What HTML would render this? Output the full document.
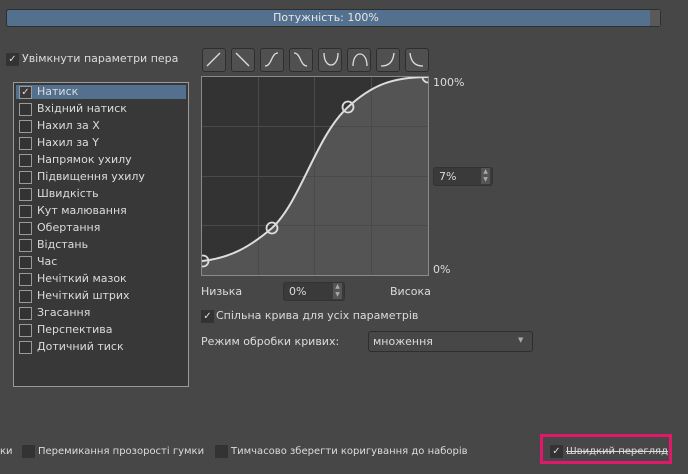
<!DOCTYPE html><html><head><meta charset="utf-8"><style>
body{margin:0;width:688px;height:474px;background:#474747;font-family:"DejaVu Sans","Liberation Sans",sans-serif;font-size:11px;color:#dcdcdc;position:relative;overflow:hidden}
.a{position:absolute;white-space:nowrap}
.cb{position:absolute;width:11px;height:11px;border:1px solid #9a9a9a;background:#333}
.dk{position:absolute;width:13px;height:13px;background:#333;color:#ddd;font-size:10px;line-height:13px;text-align:center}
.btn{position:absolute;top:48px;width:22px;height:22px;border:1px solid #2e2e2e;border-radius:3px;background:#505050}
.spin{position:absolute;background:#3a3a3a;border:1px solid #333;border-radius:3px}
.sm{font-size:10px}
</style></head><body>
<div class="a" style="left:6px;top:9px;width:655px;height:18px;background:#53708f;border:1px solid #2e2e2e;border-radius:3px;box-sizing:border-box"></div>
<div class="a" style="left:650px;top:10px;width:10px;height:16px;background:#5a5a5a"></div>
<div class="a" style="left:0;top:11px;width:652px;text-align:center;color:#e8e8e8">Потужність: 100%</div>
<div class="dk" style="left:6px;top:53px">✓</div>
<div class="a" style="left:22px;top:52px">Увімкнути параметри пера</div>

<div class="btn" style="left:202px"></div><div class="btn" style="left:231px"></div><div class="btn" style="left:260px"></div><div class="btn" style="left:289px"></div><div class="btn" style="left:318px"></div><div class="btn" style="left:347px"></div><div class="btn" style="left:376px"></div><div class="btn" style="left:405px"></div>
<svg class="a" style="left:0;top:0" width="688" height="474" fill="none" stroke="#ddd" stroke-width="1.3">
<path d="M207 66L220 53"/><path d="M236 53L249 66"/><path d="M265 66C272 66 271 53 278 53"/><path d="M294 53C301 53 300 66 307 66"/><path d="M324 53C324 69 338 69 338 53"/><path d="M353 66C353 50 367 50 367 66"/><path d="M381 66C389 66 393 62 394 53"/><path d="M410 53C411 62 415 66 423 66"/>
</svg>

<div class="a" style="left:201px;top:76px;width:227px;height:199px;background:#333;border:1px solid #8a8a8a;box-sizing:border-box"></div>
<svg class="a" style="left:201px;top:76px" width="228" height="200">
<path d="M1 185C30 182 50 170 71 152C100 125 115 60 147 31C170 10 190 1 227 1L227 199L1 199Z" fill="#545454"/>
<g stroke="#4a4a4a" stroke-width="1"><path d="M57.5 1V199M113.5 1V199M170.5 1V199M1 50.5H227M1 100.5H227M1 149.5H227"/></g>
<path d="M1 185C30 182 50 170 71 152C100 125 115 60 147 31C170 10 190 1 227 1" fill="none" stroke="#ddd" stroke-width="2"/>
<g fill="none" stroke="#ddd" stroke-width="1.8"><circle cx="71" cy="152" r="5.5"/><circle cx="147" cy="31" r="5.5"/><circle cx="2" cy="185" r="5.5"/><circle cx="227" cy="1" r="5.5"/></g>
<rect x="0.5" y="0.5" width="227" height="199" fill="none" stroke="#8a8a8a"/>
</svg>
<div class="a" style="left:433px;top:76px">100%</div>
<div class="a" style="left:433px;top:263px">0%</div>
<div class="spin" style="left:433px;top:167px;width:58px;height:17px"></div>
<div class="a" style="left:439px;top:170px">7%</div>
<div class="a" style="left:481px;top:168px;width:9px;height:16px;background:#555;font-size:6px;line-height:8px;text-align:center;color:#aaa">▲<br>▼</div>
<div class="a" style="left:201px;top:285px">Низька</div>
<div class="spin" style="left:283px;top:282px;width:60px;height:17px"></div>
<div class="a" style="left:289px;top:285px">0%</div>
<div class="a" style="left:333px;top:283px;width:9px;height:16px;background:#555;font-size:6px;line-height:8px;text-align:center;color:#aaa">▲<br>▼</div>
<div class="a" style="left:390px;top:285px">Висока</div>
<div class="dk" style="left:201px;top:310px">✓</div>
<div class="a" style="left:216px;top:309px">Спільна крива для усіх параметрів</div>
<div class="a" style="left:201px;top:335px">Режим обробки кривих:</div>
<div class="a" style="left:368px;top:331px;width:165px;height:21px;background:#474747;border:1px solid #2e2e2e;border-radius:3px;box-sizing:border-box"></div>
<div class="a" style="left:373px;top:335px">множення</div>
<div class="a" style="left:518px;top:336px;font-size:7px;color:#aaa">▼</div>

<div class="a" style="left:13px;top:82px;width:176px;height:305px;background:#383838;border:1px solid #9a9a9a;box-sizing:border-box"></div>
<div class="a" style="left:16px;top:85px;width:170px;height:14px;background:#53708f"></div>
<div style="position:absolute;left:0;top:0">
<div class="cb" style="left:19px;top:86px;background:#3a3a3a;text-align:center;line-height:11px;font-size:10px">✓</div><div class="a" style="left:37px;top:85px">Натиск</div>
<div class="cb" style="left:19px;top:103px"></div><div class="a" style="left:37px;top:102px">Вхідний натиск</div>
<div class="cb" style="left:19px;top:120px"></div><div class="a" style="left:37px;top:119px">Нахил за X</div>
<div class="cb" style="left:19px;top:137px"></div><div class="a" style="left:37px;top:136px">Нахил за Y</div>
<div class="cb" style="left:19px;top:154px"></div><div class="a" style="left:37px;top:153px">Напрямок ухилу</div>
<div class="cb" style="left:19px;top:171px"></div><div class="a" style="left:37px;top:170px">Підвищення ухилу</div>
<div class="cb" style="left:19px;top:188px"></div><div class="a" style="left:37px;top:187px">Швидкість</div>
<div class="cb" style="left:19px;top:205px"></div><div class="a" style="left:37px;top:204px">Кут малювання</div>
<div class="cb" style="left:19px;top:222px"></div><div class="a" style="left:37px;top:221px">Обертання</div>
<div class="cb" style="left:19px;top:239px"></div><div class="a" style="left:37px;top:238px">Відстань</div>
<div class="cb" style="left:19px;top:256px"></div><div class="a" style="left:37px;top:255px">Час</div>
<div class="cb" style="left:19px;top:273px"></div><div class="a" style="left:37px;top:272px">Нечіткий мазок</div>
<div class="cb" style="left:19px;top:290px"></div><div class="a" style="left:37px;top:289px">Нечіткий штрих</div>
<div class="cb" style="left:19px;top:307px"></div><div class="a" style="left:37px;top:306px">Згасання</div>
<div class="cb" style="left:19px;top:324px"></div><div class="a" style="left:37px;top:323px">Перспектива</div>
<div class="cb" style="left:19px;top:341px"></div><div class="a" style="left:37px;top:340px">Дотичний тиск</div>
</div>

<div class="a sm" style="left:0;top:446px">ки</div>
<div class="dk" style="left:22px;top:445px"></div>
<div class="a sm" style="left:38px;top:446px">Перемикання прозорості гумки</div>
<div class="dk" style="left:215px;top:445px"></div>
<div class="a sm" style="left:231px;top:446px">Тимчасово зберегти коригування до наборів</div>
<div class="a" style="left:540px;top:434px;width:132px;height:30px;border:3px solid #e0186a;box-sizing:border-box"></div>
<div class="dk" style="left:550px;top:445px">✓</div>
<div class="a sm" style="left:566px;top:446px;text-decoration:line-through">Швидкий перегляд</div>
</body></html>
